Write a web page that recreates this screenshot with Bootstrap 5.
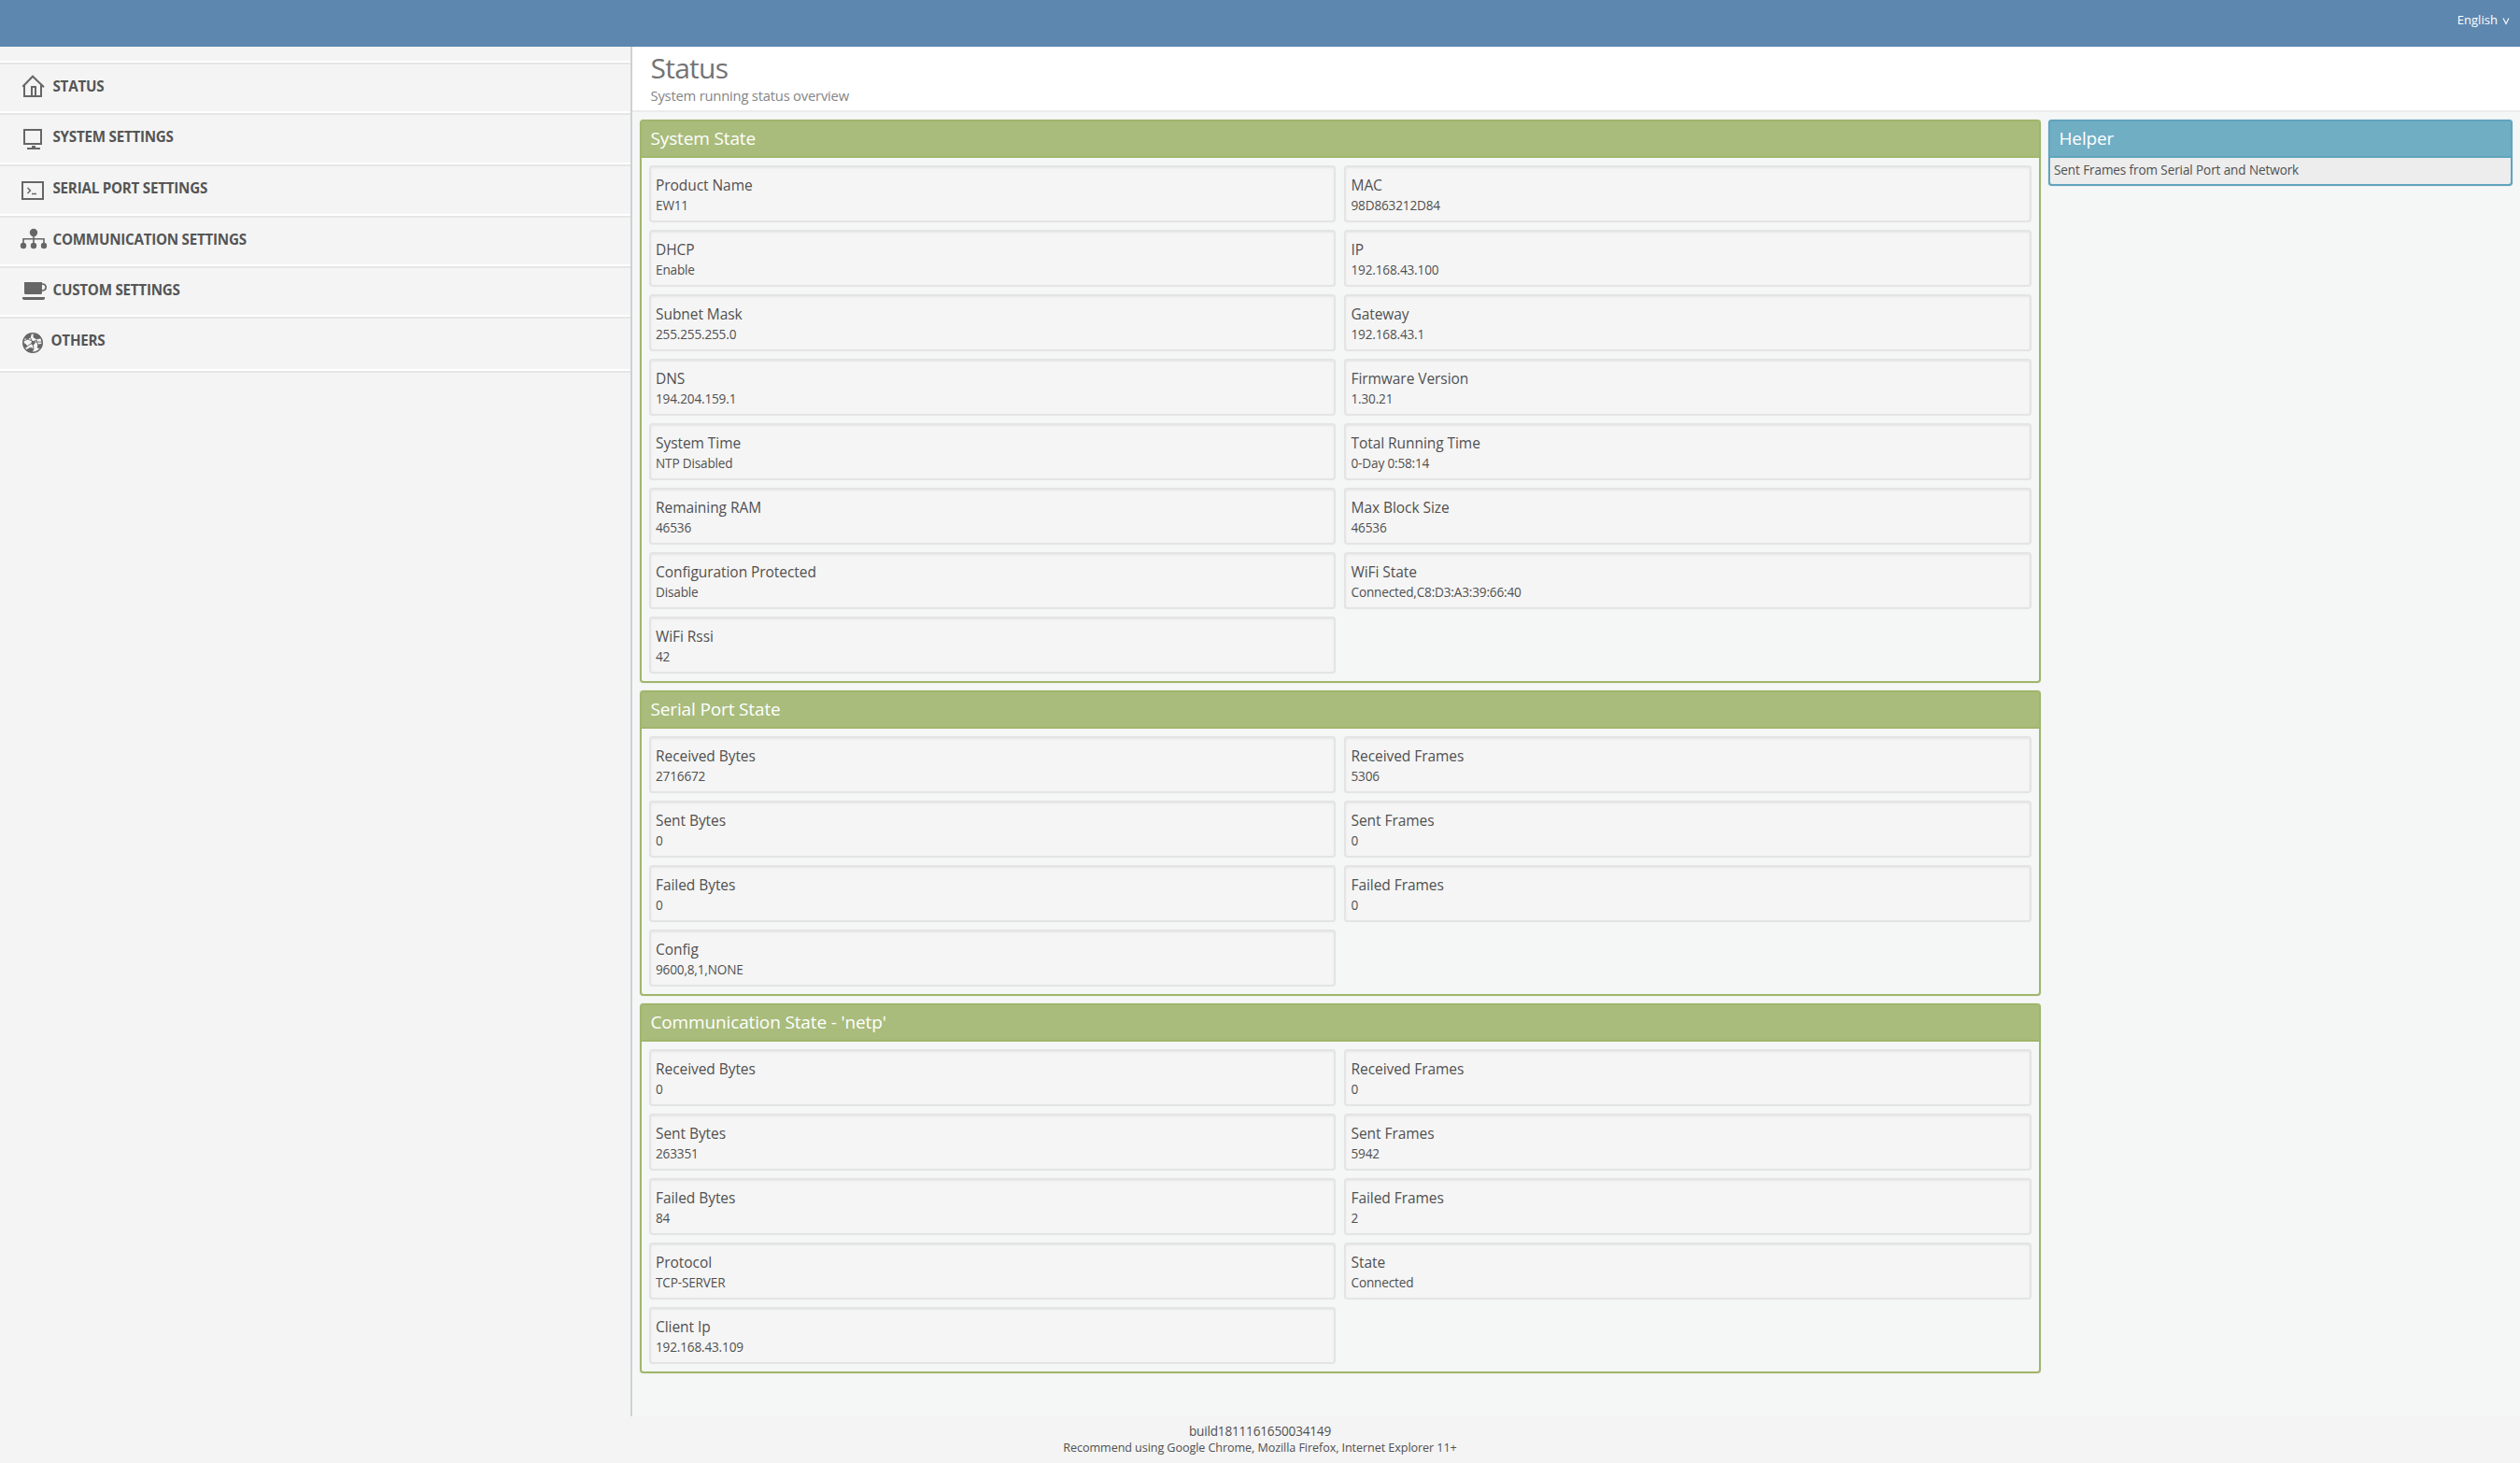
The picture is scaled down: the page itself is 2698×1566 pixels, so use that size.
<!DOCTYPE html>
<html lang="en">
<head>
<meta charset="utf-8">
<meta name="viewport" content="width=device-width, initial-scale=1">
<title>Status</title>
<link rel="stylesheet" href="https://cdn.jsdelivr.net/npm/bootstrap@5.3.0/dist/css/bootstrap.min.css">
<style>
body{font-family:"Open Sans","Noto Sans",sans-serif;background:#f4f4f4;color:#505050;min-height:1566px}
.topbar{height:50px;background:#5d87af;color:#fff;font-size:13.1px;padding:12px 11px 0 0;line-height:18px;gap:5px}
.topbar svg{margin-top:3px}
.middle{height:1466px}
.sidebar{width:677px;border-right:2px solid #cdd1d2;background:#f4f4f4}
.sidebar ul{margin-top:15px;border-top:2px solid #fff;border-bottom:2px solid #e6e6e6}
.sidebar li{height:54px;border-top:2px solid #e6e6e6;border-bottom:2px solid #fff;padding-left:20px;gap:4.5px;font-weight:700;font-size:15.2px;letter-spacing:-.25px;line-height:47px;color:#555}
.sidebar li.tall{height:55px}
.sidebar li.last-item{height:58px;gap:2.5px}
.sidebar svg{width:32px;height:50px;flex:none;color:#666}
.main-pane{background:#f5f7f7}
.page-head{height:70px;background:#fff;border-bottom:2px solid #ececec;padding:4px 0 0 19.5px}
.page-head h1{font-size:30px;letter-spacing:-.75px;line-height:38px;font-weight:400;color:#737373;margin:0}
.page-head p{font-size:14.8px;letter-spacing:-.22px;line-height:20px;color:#858585;margin:0}
.content-area{padding:8px 8px 0 7.5px;gap:8px}
.panels{width:1500px;gap:8px}
.panel-box{border:2px solid #a0b66c;border-radius:4px;box-shadow:0 0 1px #a0b66c}
.panel-title{height:39px;border-bottom:2px solid #a0b66c;background:#a9bc7c;color:#fff;font-size:19px;letter-spacing:-.14px;line-height:37px;padding-left:10px}
.panel-items{padding:8px 8px 0 8px;column-gap:9px;row-gap:8px}
.panel-items::after{content:"";width:100%;height:0}
.info{flex:0 0 735.5px;height:61px;border:2px solid #e4e4e4;border-radius:4px;background:#f5f5f5;box-shadow:inset 0 1px 2px #e6e6e6,0 0 1px #e6e6e6;padding:6px 0 0 5.5px}
.info dt{font-size:15.5px;letter-spacing:-.06px;font-weight:400;line-height:26px}
.info dd{font-size:13.6px;letter-spacing:-.17px;line-height:20px;margin:-1px 0 0}
.helper-box{border:2px solid #61a4bc;border-radius:4px;box-shadow:0 0 1px #61a4bc;background:#ededed;height:71px}
.helper-box .panel-title{background:#70aec4;border-color:#61a4bc}
.helper-box p{font-size:13.6px;letter-spacing:-.13px;line-height:26px;margin:0;padding-left:4.5px}
.page-foot{height:50px;padding-top:7px;font-size:13.6px;letter-spacing:-.2px;line-height:18px}
.page-foot .hint{font-size:12.6px;letter-spacing:-.08px}
</style>
<script src="https://cdn.jsdelivr.net/npm/bootstrap@5.3.0/dist/js/bootstrap.bundle.min.js"></script>
</head>
<body>
<header class="topbar d-flex justify-content-end align-items-start">
  <span>English</span>
  <svg width="8" height="14" viewBox="0 0 8 14" fill="none" stroke="#fff" stroke-width="1.1"><path d="M1 4.500 4 10.500 7 4.500"/></svg>
</header>
<div class="middle d-flex">
  <nav class="sidebar flex-shrink-0">
    <ul class="list-unstyled mb-0">
      <li class="d-flex"><svg viewBox="20 69 32 50" fill="none" stroke="currentColor" stroke-width="2"><path d="M24.300 92.800 35 81.700 47 93.200M26 91V103H44V91M34 103V93H38V103"/></svg>STATUS</li>
      <li class="d-flex tall"><svg viewBox="20 123 32 50" fill="none" stroke="currentColor" stroke-width="2"><path d="M26 139H44V154H26ZM34 157H38M29 159H43"/></svg>SYSTEM SETTINGS</li>
      <li class="d-flex tall"><svg viewBox="20 178 32 50" fill="none" stroke="currentColor" stroke-width="2"><path d="M24 195H46V213H24Z"/><path d="M29.500 201 32.500 204 29.500 207M34 207.500H39" stroke-width="1.500"/></svg>SERIAL PORT SETTINGS</li>
      <li class="d-flex"><svg viewBox="20 233 32 50" fill="currentColor"><circle cx="36" cy="249" r="4.200"/><circle cx="25" cy="263" r="3.200"/><circle cx="36" cy="263" r="3.200"/><circle cx="47" cy="263" r="3.200"/><path d="M36 252V261M25 261V255.700H47V261" fill="none" stroke="currentColor" stroke-width="1.600"/></svg>COMMUNICATION SETTINGS</li>
      <li class="d-flex"><svg viewBox="20 287 32 50" fill="currentColor"><path d="M26 302H45V313.500Q45 315 43.500 315H27.500Q26 315 26 313.500ZM24 318H48V319.500Q47.500 321 46 321H26Q24.500 321 24 319.500Z"/><path d="M44 304H46Q49.200 304.500 49.200 307.500T46 311H44" fill="none" stroke="currentColor" stroke-width="1.600"/></svg>CUSTOM SETTINGS</li>
      <li class="d-flex last-item"><svg viewBox="20 341 32 50" fill="currentColor"><circle cx="35" cy="367" r="10.300" fill="none" stroke="currentColor" stroke-width="1.400"/><path d="M28 359 33 357 33 360 30 363 27 362ZM36 358 42 359 43 362 39 363 36 361ZM25 367 28 369 29 371 26 372ZM34 366 37 365 37 368 34 369ZM41 369 45 368 43 373 40 372ZM29 374 33 372 36 374 34 377 30 376Z" stroke="currentColor" stroke-width=".8"/><path d="M25 365 30 363 36 366 45 366M27 372 33 368 39 364M32 361 35 366 36 374M39 364 41 370" fill="none" stroke="currentColor" stroke-width=".9"/></svg>OTHERS</li>
    </ul>
  </nav>
  <main class="main-pane flex-grow-1">
    <div class="page-head">
      <h1>Status</h1>
      <p>System running status overview</p>
    </div>
    <div class="content-area d-flex align-items-start">
      <div class="panels d-flex flex-column flex-shrink-0">
        <section class="panel-box">
          <div class="panel-title">System State</div>
          <div class="panel-items d-flex flex-wrap">
            <dl class="info mb-0"><dt>Product Name</dt><dd>EW11</dd></dl>
            <dl class="info mb-0"><dt>MAC</dt><dd>98D863212D84</dd></dl>
            <dl class="info mb-0"><dt>DHCP</dt><dd>Enable</dd></dl>
            <dl class="info mb-0"><dt>IP</dt><dd>192.168.43.100</dd></dl>
            <dl class="info mb-0"><dt>Subnet Mask</dt><dd>255.255.255.0</dd></dl>
            <dl class="info mb-0"><dt>Gateway</dt><dd>192.168.43.1</dd></dl>
            <dl class="info mb-0"><dt>DNS</dt><dd>194.204.159.1</dd></dl>
            <dl class="info mb-0"><dt>Firmware Version</dt><dd>1.30.21</dd></dl>
            <dl class="info mb-0"><dt>System Time</dt><dd>NTP Disabled</dd></dl>
            <dl class="info mb-0"><dt>Total Running Time</dt><dd>0-Day 0:58:14</dd></dl>
            <dl class="info mb-0"><dt>Remaining RAM</dt><dd>46536</dd></dl>
            <dl class="info mb-0"><dt>Max Block Size</dt><dd>46536</dd></dl>
            <dl class="info mb-0"><dt>Configuration Protected</dt><dd>Disable</dd></dl>
            <dl class="info mb-0"><dt>WiFi State</dt><dd>Connected,C8:D3:A3:39:66:40</dd></dl>
            <dl class="info mb-0"><dt>WiFi Rssi</dt><dd>42</dd></dl>
          </div>
        </section>
        <section class="panel-box">
          <div class="panel-title">Serial Port State</div>
          <div class="panel-items d-flex flex-wrap">
            <dl class="info mb-0"><dt>Received Bytes</dt><dd>2716672</dd></dl>
            <dl class="info mb-0"><dt>Received Frames</dt><dd>5306</dd></dl>
            <dl class="info mb-0"><dt>Sent Bytes</dt><dd>0</dd></dl>
            <dl class="info mb-0"><dt>Sent Frames</dt><dd>0</dd></dl>
            <dl class="info mb-0"><dt>Failed Bytes</dt><dd>0</dd></dl>
            <dl class="info mb-0"><dt>Failed Frames</dt><dd>0</dd></dl>
            <dl class="info mb-0"><dt>Config</dt><dd>9600,8,1,NONE</dd></dl>
          </div>
        </section>
        <section class="panel-box">
          <div class="panel-title">Communication State - 'netp'</div>
          <div class="panel-items d-flex flex-wrap">
            <dl class="info mb-0"><dt>Received Bytes</dt><dd>0</dd></dl>
            <dl class="info mb-0"><dt>Received Frames</dt><dd>0</dd></dl>
            <dl class="info mb-0"><dt>Sent Bytes</dt><dd>263351</dd></dl>
            <dl class="info mb-0"><dt>Sent Frames</dt><dd>5942</dd></dl>
            <dl class="info mb-0"><dt>Failed Bytes</dt><dd>84</dd></dl>
            <dl class="info mb-0"><dt>Failed Frames</dt><dd>2</dd></dl>
            <dl class="info mb-0"><dt>Protocol</dt><dd>TCP-SERVER</dd></dl>
            <dl class="info mb-0"><dt>State</dt><dd>Connected</dd></dl>
            <dl class="info mb-0"><dt>Client Ip</dt><dd>192.168.43.109</dd></dl>
          </div>
        </section>
      </div>
      <aside class="helper-box flex-grow-1">
        <div class="panel-title">Helper</div>
        <p>Sent Frames from Serial Port and Network</p>
      </aside>
    </div>
  </main>
</div>
<footer class="page-foot text-center">
  <div>build1811161650034149</div>
  <div class="hint">Recommend using Google Chrome, Mozilla Firefox, Internet Explorer 11+</div>
</footer>
</body>
</html>
